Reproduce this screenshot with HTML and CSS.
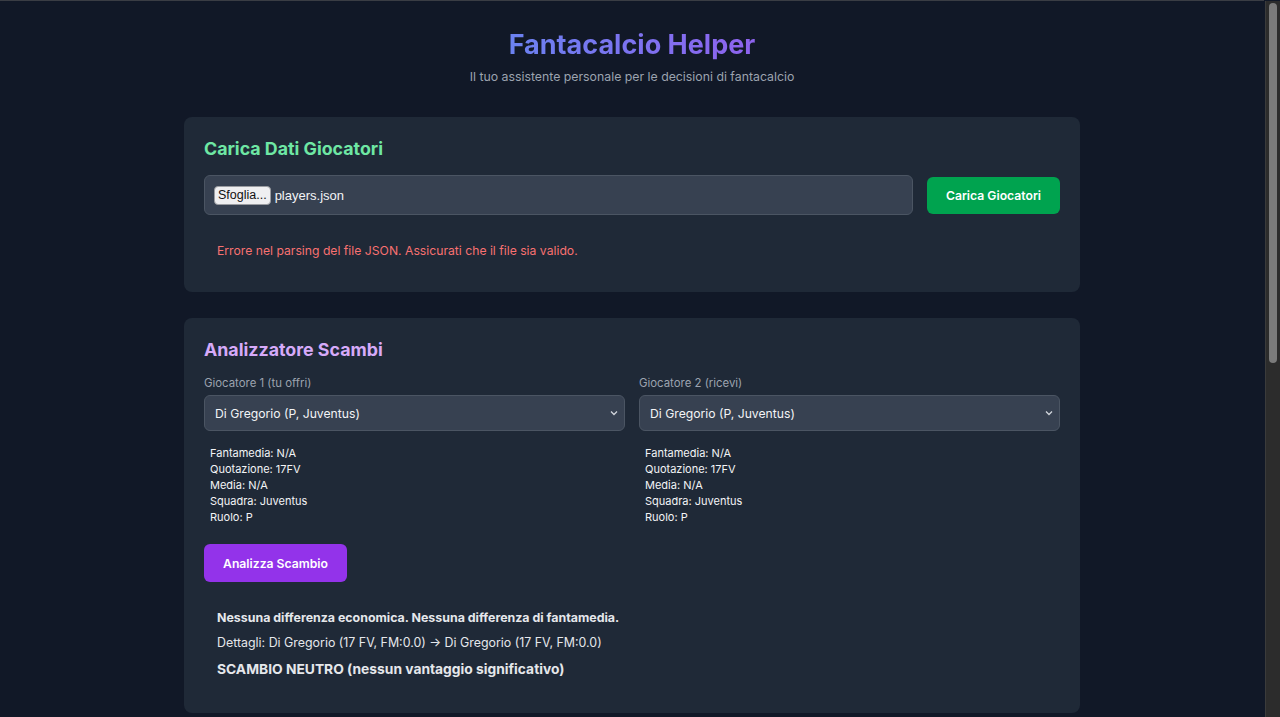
FILE: index.html
```html
<!DOCTYPE html>
<html lang="it">
<head>
<meta charset="utf-8">
<title>Fantacalcio Helper</title>
<link rel="stylesheet" href="styles.css">
</head>
<body>
<div class="topline"></div>
<div class="page">
  <header class="header">
    <h1 class="title">Fantacalcio Helper</h1>
    <p class="subtitle">Il tuo assistente personale per le decisioni di fantacalcio</p>
  </header>

  <section class="card card-upload">
    <h2 class="card-title green">Carica Dati Giocatori</h2>
    <div class="upload-row">
      <div class="file-input">
        <span class="file-btn">Sfoglia...</span>
        <span class="file-name">players.json</span>
      </div>
      <button class="btn btn-green">Carica Giocatori</button>
    </div>
    <p class="error">Errore nel parsing del file JSON. Assicurati che il file sia valido.</p>
  </section>

  <section class="card card-trade">
    <h2 class="card-title purple">Analizzatore Scambi</h2>
    <div class="trade-grid">
      <div class="col">
        <label class="label">Giocatore 1 (tu offri)</label>
        <div class="select"><span>Di Gregorio (P, Juventus)</span>
          <svg class="chev" width="8" height="6" viewBox="0 0 8 6"><path d="M1 1.5 L4 4.5 L7 1.5" fill="none" stroke="#d1d5db" stroke-width="1.3"/></svg>
        </div>
        <div class="info">
          <div>Fantamedia: N/A</div>
          <div>Quotazione: 17FV</div>
          <div>Media: N/A</div>
          <div>Squadra: Juventus</div>
          <div>Ruolo: P</div>
        </div>
      </div>
      <div class="col">
        <label class="label">Giocatore 2 (ricevi)</label>
        <div class="select"><span>Di Gregorio (P, Juventus)</span>
          <svg class="chev" width="8" height="6" viewBox="0 0 8 6"><path d="M1 1.5 L4 4.5 L7 1.5" fill="none" stroke="#d1d5db" stroke-width="1.3"/></svg>
        </div>
        <div class="info">
          <div>Fantamedia: N/A</div>
          <div>Quotazione: 17FV</div>
          <div>Media: N/A</div>
          <div>Squadra: Juventus</div>
          <div>Ruolo: P</div>
        </div>
      </div>
    </div>
    <button class="btn btn-purple">Analizza Scambio</button>
    <div class="result">
      <p class="res-main">Nessuna differenza economica. Nessuna differenza di fantamedia.</p>
      <p class="res-detail">Dettagli: Di Gregorio (17 FV, FM:0.0) → Di Gregorio (17 FV, FM:0.0)</p>
      <p class="res-verdict">SCAMBIO NEUTRO (nessun vantaggio significativo)</p>
    </div>
  </section>
</div>
<div class="scrollbar"><div class="thumb"></div></div>
</body>
</html>
```

FILE: styles.css
```css
* { box-sizing: border-box; }
html { overflow: hidden; }
html, body { margin: 0; padding: 0; }
body {
  background: #111827;
  color: #f3f4f6;
  font-family: Inter, "Noto Sans", sans-serif;
  padding-right: 16px;
  min-height: 717px;
}
.topline {
  height: 1px;
  background: #3a3d44;
}
.scrollbar {
  position: fixed;
  top: 1px;
  right: 0;
  bottom: 0;
  width: 15px;
  background: #2c2c2c;
  border-left: 1px solid #3b3b3b;
}
.thumb {
  margin: 2px 0 0 3px;
  width: 8px;
  height: 360px;
  border-radius: 4px;
  background: #7b7b7b;
}
.page {
  width: 896px;
  margin: 0 auto;
  padding-top: 26px;
}
.header {
  text-align: center;
  margin-bottom: 30px;
}
.title {
  display: inline-block;
  margin: 0;
  font-size: 27px;
  line-height: 36px;
  font-weight: 700;
  background: linear-gradient(90deg, #6b82f1, #8e63ee);
  -webkit-background-clip: text;
  background-clip: text;
  color: transparent;
}
.subtitle {
  margin: 4px 0 0;
  font-size: 12.3px;
  line-height: 20px;
  color: #9ca3af;
}
.card {
  background: #1f2937;
  border-radius: 8px;
  padding: 20px;
  margin-bottom: 26px;
}
.card-title {
  margin: 0 0 14px;
  font-size: 17.8px;
  line-height: 24px;
  font-weight: 700;
}
.card-trade .card-title { margin-bottom: 13px; }
.green { color: #6ee7a4; }
.purple { color: #d6aaf9; }
.upload-row {
  display: flex;
  align-items: center;
  gap: 14px;
}
.file-input {
  flex: 1;
  height: 40px;
  background: #374151;
  border: 1px solid #4b5563;
  border-radius: 6px;
  display: flex;
  align-items: center;
  padding: 0 9px;
}
.file-btn {
  background: #efeff1;
  color: #111;
  border: 1px solid #9a9ca1;
  border-radius: 4px;
  padding: 1px 3px;
  font-size: 12.5px;
  line-height: 15px;
  font-family: "Liberation Sans", Arial, sans-serif;
  margin-right: 4px;
}
.file-name {
  color: #f3f4f6;
  font-family: "Liberation Sans", Arial, sans-serif;
  font-size: 13px;
}
.btn {
  display: block;
  border: 0;
  border-radius: 6px;
  color: #fff;
  font-family: Inter, "Noto Sans", sans-serif;
  font-size: 12.2px;
  font-weight: 600;
  cursor: pointer;
}
.btn-green {
  background: #00a34f;
  height: 37px;
  width: 133px;
}
.error {
  margin: 14px 0 0;
  padding: 12px 13px 11px;
  color: #f87171;
  font-size: 12.2px;
  line-height: 20px;
}
.card-trade { padding-bottom: 33px; }
.trade-grid {
  display: grid;
  grid-template-columns: 1fr 1fr;
  column-gap: 14px;
}
.label {
  display: block;
  font-size: 11.4px;
  line-height: 16px;
  color: #9ca3af;
  margin: 0 0 4px;
}
.select {
  height: 36px;
  background: #374151;
  border: 1px solid #4b5563;
  border-radius: 6px;
  display: flex;
  align-items: center;
  justify-content: space-between;
  padding: 0 6px 0 10px;
  font-size: 12.2px;
  color: #f3f4f6;
}
.info {
  padding: 14px 6px 0;
  font-size: 11px;
  line-height: 16px;
  color: #f3f4f6;
}
.btn-purple {
  margin-top: 19px;
  background: #9333ea;
  width: 143px;
  height: 38px;
}
.result {
  padding: 26px 13px 0;
}
.result p { margin: 0; }
.res-main {
  font-size: 12.4px;
  line-height: 20px;
  font-weight: 700;
  color: #e5e7eb;
}
.res-detail {
  margin-top: 5px !important;
  font-size: 12.4px;
  line-height: 20px;
  color: #e5e7eb;
}
.res-verdict {
  margin-top: 5px !important;
  font-size: 13.8px;
  line-height: 22px;
  font-weight: 700;
  color: #e5e7eb;
}
```
